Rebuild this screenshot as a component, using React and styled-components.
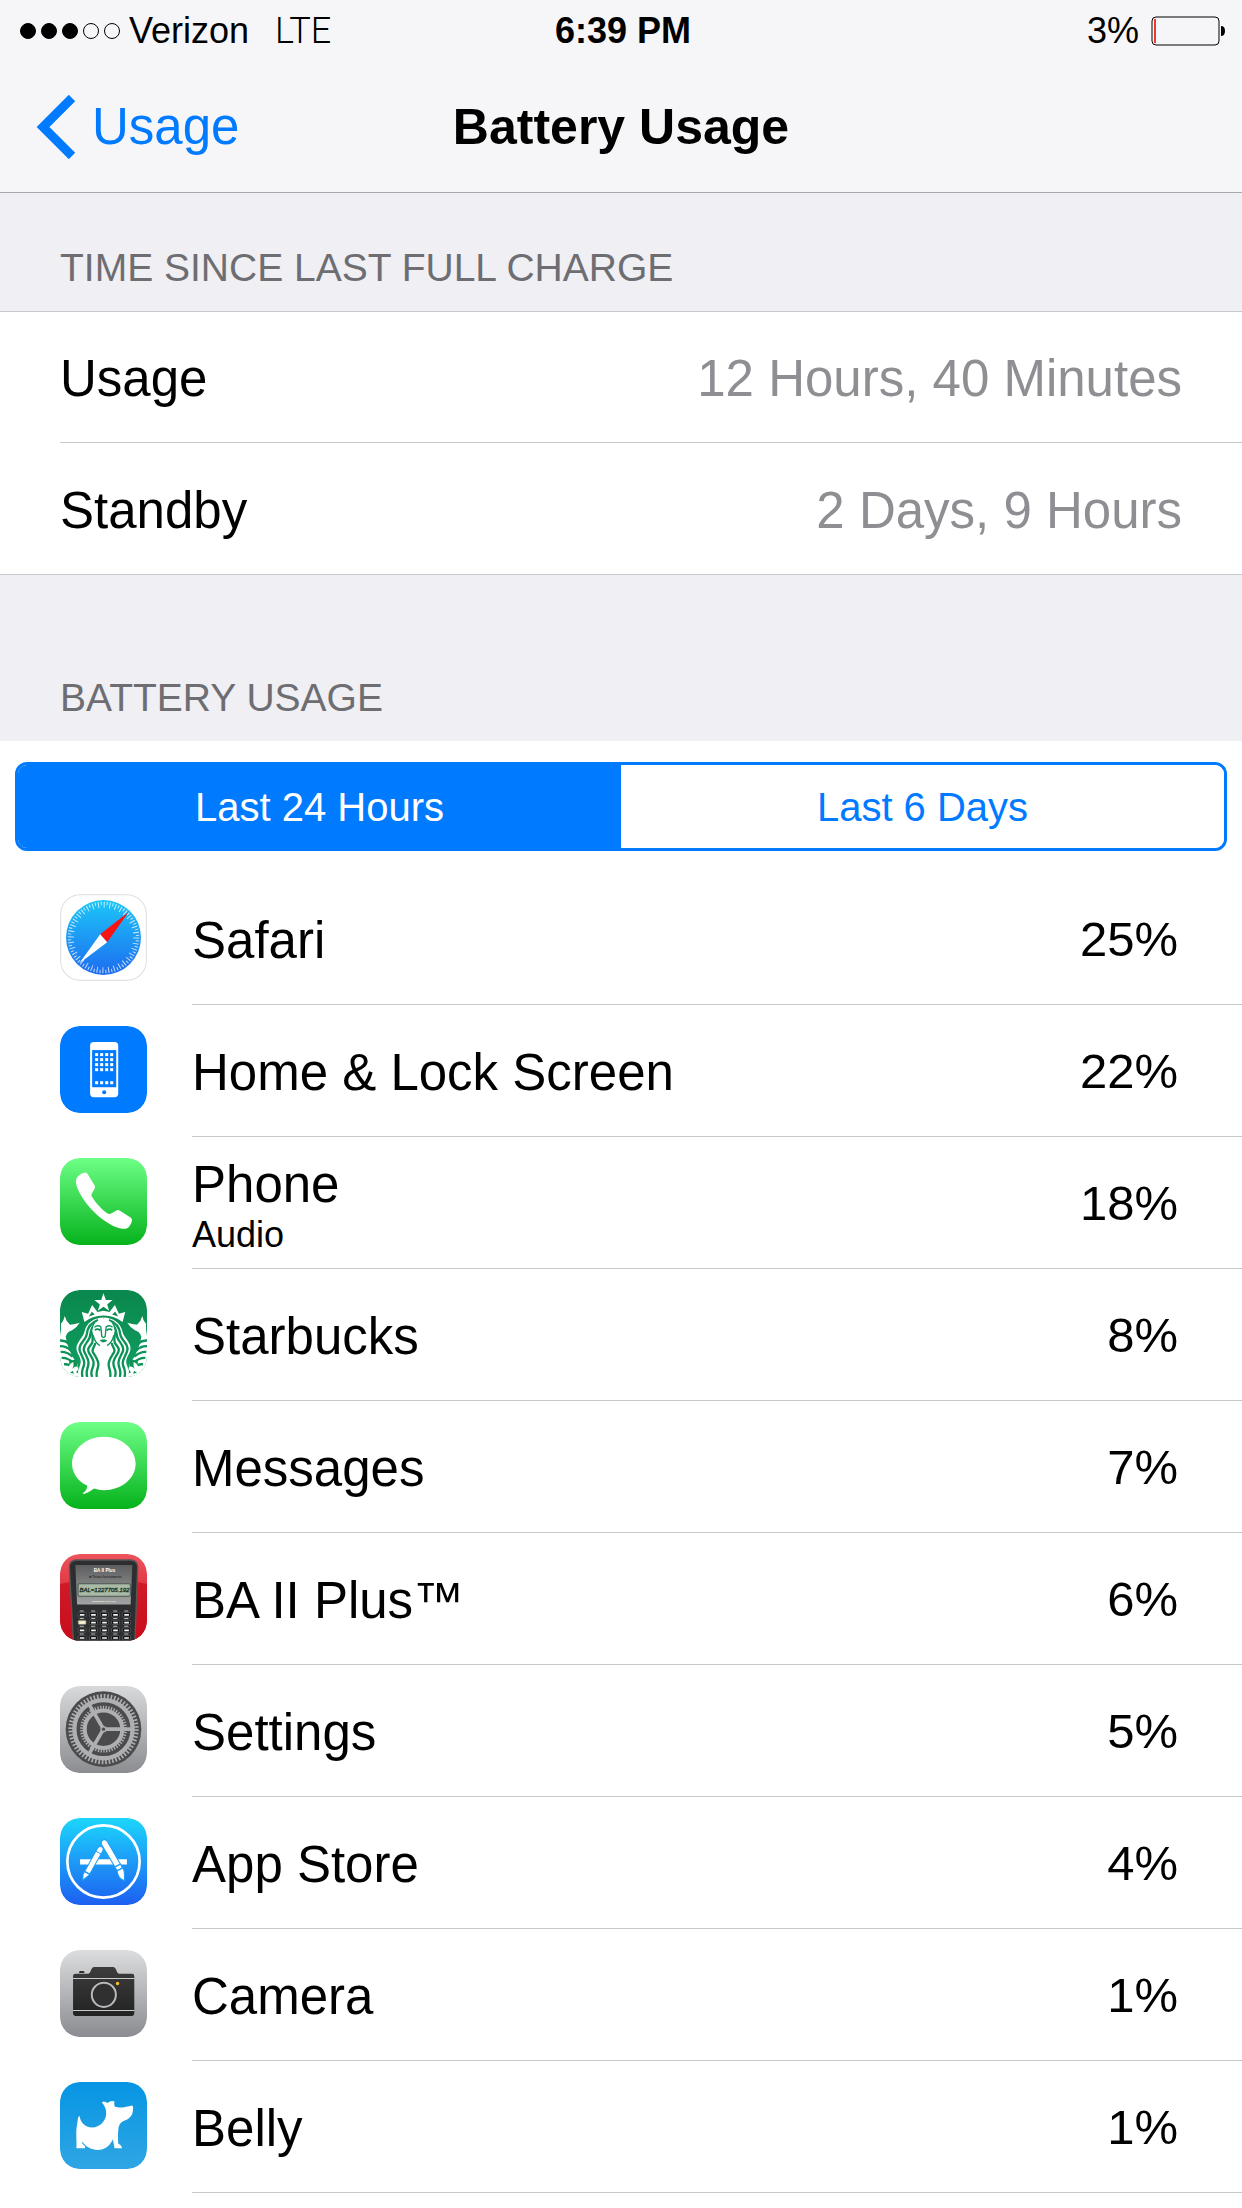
import React, { useState } from "react";
import styled, { createGlobalStyle } from "styled-components";

const GlobalStyle = createGlobalStyle`
  * {
    box-sizing: border-box;
  }

  body {
    margin: 0;
    background: #fff;
    color: #000;
    font-family: "Liberation Sans", Helvetica, Arial, sans-serif;
    font-size: 51px;
    line-height: 60px;
  }
`;

const Page = styled.div`
  display: flex;
  flex-direction: column;
  min-height: 100vh;
  overflow: hidden;
`;

const Top = styled.header`
  background: #f6f6f8;
  border-bottom: 1px solid #a7a7ac;
`;

const StatusBar = styled.div`
  display: grid;
  grid-template-columns: 1fr auto 1fr;
  align-items: center;
  height: 62px;
  padding: 0 16px 0 20px;
  font-size: 36px;
  line-height: 40px;
`;

const StatusLeft = styled.div`
  display: flex;
  align-items: center;
`;

const StatusRight = styled(StatusLeft)`
  justify-content: flex-end;
  gap: 12px;
`;

const Signal = styled.div`
  display: flex;
  gap: 5px;
  margin-right: 9px;
`;

const Dot = styled.span`
  width: 16px;
  height: 16px;
  border: 1px solid #000;
  border-radius: 50%;
  background: ${(p) => (p.$on ? "#000" : "transparent")};
`;

const Network = styled.span`
  margin-left: 26px;
  font-family: Roboto, sans-serif;
  font-weight: 300;
`;

const Time = styled.strong`
  font-weight: 700;
`;

const NavBar = styled.nav`
  display: grid;
  grid-template-columns: 1fr auto 1fr;
  align-items: center;
  height: 130px;
  padding: 0 36px;
`;

const Back = styled.a`
  display: flex;
  align-items: center;
  gap: 16px;
  color: #007aff;
  text-decoration: none;
`;

const Title = styled.h1`
  margin: 0;
  font-size: 50px;
  line-height: 60px;
`;

const SectionHeader = styled.h2`
  display: flex;
  align-items: flex-end;
  height: ${(p) => (p.$tall ? "166px" : "118px")};
  margin: 0;
  padding: 0 60px 19px;
  background: #efeff4;
  color: #6d6d72;
  font-size: 39px;
  font-weight: 400;
  line-height: 48px;
  text-transform: uppercase;
`;

const List = styled.ul`
  margin: 0;
  padding: 0;
  list-style: none;
`;

const DetailList = styled(List)`
  padding-left: 60px;
  border-top: 1px solid #c8c7cc;
  border-bottom: 1px solid #c8c7cc;
`;

const DetailRow = styled.li`
  display: flex;
  align-items: center;
  justify-content: space-between;
  height: 130px;
  padding: 4px 60px 0 0;

  & + & {
    height: 132px;
    border-top: 1px solid #c8c7cc;
  }
`;

const Detail = styled.span`
  color: #8e8e93;
`;

const Segments = styled.div`
  display: flex;
  margin: 21px 15px 22px;
  border: 3px solid #007aff;
  border-radius: 12px;
  overflow: hidden;
`;

const Segment = styled.button`
  flex: 1;
  height: 83px;
  padding: 0;
  border: 0;
  background: ${(p) => (p.$active ? "#007aff" : "#fff")};
  color: ${(p) => (p.$active ? "#fff" : "#007aff")};
  font-family: inherit;
  font-size: 40px;
  line-height: 48px;
`;

const AppRow = styled.li`
  display: flex;
  align-items: center;
  gap: 45px;
  height: 132px;
  padding-left: 60px;
`;

const Icon = styled.svg`
  flex: none;
  width: 87px;
  height: 87px;
  margin-bottom: 4px;
  border-radius: 20px;
`;

const AppBody = styled.div`
  display: flex;
  flex: 1;
  align-items: center;
  justify-content: space-between;
  height: 100%;
  padding-right: 64px;
  border-bottom: 1px solid #c8c7cc;
`;

const AppText = styled.div`
  display: flex;
  flex-direction: column;
  padding-top: 5px;
`;

const AppNote = styled.span`
  font-size: 36px;
  line-height: 40px;
`;

const Percent = styled.span`
  font-size: 49px;
`;

const Fade = ({ id, from, to }) => (
  <linearGradient id={id} x1="0" y1="0" x2="0" y2="1">
    <stop offset="0" stopColor={from} />
    <stop offset="1" stopColor={to} />
  </linearGradient>
);

const SafariIcon = () => (
  <Icon viewBox="0 0 260 260" aria-hidden="true">
    <defs><Fade id="safari" from="#1cc6f8" to="#1d6cf0" /></defs>
    <rect x="2" y="2" width="256" height="256" rx="58" fill="#fff" stroke="#dcdcde" strokeWidth="3" />
    <circle cx="130" cy="130" r="112" fill="url(#safari)" />
    <circle cx="130" cy="130" r="98" fill="none" stroke="#fff" strokeOpacity="0.75" strokeWidth="18" strokeDasharray="3 14.1" />
    <circle cx="130" cy="130" r="102" fill="none" stroke="#fff" strokeOpacity="0.75" strokeWidth="10" strokeDasharray="3 14.8" strokeDashoffset="9" />
    <path d="M205 54 120 120 141 144z" fill="#fb1314" />
    <path d="M58 207 120 120 141 144z" fill="#fff" />
  </Icon>
);

const HomeIcon = () => (
  <Icon viewBox="0 0 260 260" aria-hidden="true">
    <rect width="260" height="260" rx="58" fill="#007aff" />
    <rect x="90" y="48" width="84" height="165" rx="11" fill="#fff" />
    <rect x="96" y="72" width="72" height="111" fill="#007aff" />
    {[81, 96, 111, 126, 165].map((y) =>
      [105, 120, 135, 150].map((x) => (
        <rect key={`${x}-${y}`} x={x} y={y} width="9" height="9" fill="#fff" />
      ))
    )}
    <circle cx="132" cy="198" r="6" fill="#007aff" />
  </Icon>
);

const PhoneIcon = () => (
  <Icon viewBox="0 0 260 260" aria-hidden="true">
    <defs><Fade id="phone" from="#6dff86" to="#06b21c" /></defs>
    <rect width="260" height="260" rx="58" fill="url(#phone)" />
    <path
      d="M48 66C50 54 62 46 75 43Q79 43 82 47L104 83Q107 88 102 94L95 106Q92 112 97 118C108 136 124 153 141 165Q147 169 153 166L170 156Q174 154 178 157L211 178Q217 182 215 188C211 200 207 207 199 211C184 214 166 208 151 199C112 176 78 142 58 103C51 89 46 77 48 66z"
      fill="#fff"
    />
  </Icon>
);

const StarbucksTail = () => (
  <g>
    <path d="M0 137Q4 118 3 100Q10 95 14 78Q17 92 30 104Q44 103 59 98Q51 112 36 120Q21 124 17 140Q22 180 52 222L60 260H0z" fill="#fff" />
    <path d="M0 151Q14 150 27 160M0 168Q16 167 32 180M2 185Q20 184 38 199M5 203Q23 202 43 219M12 222Q28 220 48 236" fill="none" stroke="#0c9458" strokeWidth="7" />
    <path d="M27 213L48 207L54 232L30 238zM30 247l8-6 4 9zM48 246l5-7 4 11z" fill="#0c9458" />
    <path d="M26 238q-2-16 14-23q2 12-3 20q8-9 17-6q-2 10-13 14z" fill="#fff" />
  </g>
);

const StarbucksHair = () => (
  <g>
    <path d="M130 82C99 83 80 99 74 122C70 145 44 158 50 181C55 199 69 207 58 230Q52 244 56 260H130z" fill="#fff" />
    <g fill="none" stroke="#0c9458" strokeWidth="7">
      <path d="M114 90C90 98 82 112 80 132C77 153 53 160 59 181C64 199 79 211 69 232Q64 245 67 260" />
      <path d="M106 101C92 110 92 125 89 141C84 158 66 164 72 183C79 200 91 213 82 234Q78 246 81 260" />
      <path d="M95 124C96 137 101 150 95 160C86 171 80 176 88 190C98 206 105 216 97 234Q91 246 96 260" />
      <path d="M105 158C106 168 92 176 99 187C108 201 120 216 112 236Q108 248 110 260" />
    </g>
  </g>
);

const StarbucksIcon = () => (
  <Icon viewBox="0 0 260 260" aria-hidden="true">
    <defs>
      <clipPath id="sbux"><rect width="260" height="260" rx="58" /></clipPath>
      <Fade id="sbuxBg" from="#0a874d" to="#10a061" />
    </defs>
    <g clipPath="url(#sbux)">
      <rect width="260" height="260" fill="url(#sbuxBg)" />
      <path d="M130 10l7 20h20l-16 13 6 19-17-12-17 12 6-19-16-13h20z" fill="#fff" />
      <path d="M73 96L65 66L84 71L96 45L112 66L130 62L148 66L164 45L176 71L195 66L187 96Q164 76 130 76T73 96z" fill="#fff" />
      <path d="M86 79l9-14 9 8zM174 79l-9-14-9 8z" fill="#0c8a4f" />
      <StarbucksTail />
      <g transform="translate(260 0) scale(-1 1)"><StarbucksTail /></g>
      <StarbucksHair />
      <g transform="translate(260 0) scale(-1 1)"><StarbucksHair /></g>
      <path d="M130 87C102 91 96 111 98 129C100 151 113 169 130 171C147 169 160 151 162 129C164 111 158 91 130 87z" fill="#fff" />
      <path d="M130 166C109 176 109 194 117 210C125 224 122 242 118 260H142C138 242 135 224 143 210C151 194 151 176 130 166z" fill="#fff" />
      <g fill="none" stroke="#0c9458" strokeWidth="4">
        <path d="M103 111Q112 103 122 110L125 139Q130 144 135 139L138 110Q148 103 157 111" />
        <path d="M104 120Q112 114 121 121M139 121Q148 114 156 120" strokeWidth="5" />
        <path d="M119 151Q130 145 141 151Q130 161 119 151z" fill="#0c9458" strokeWidth="1" />
        <path d="M99 135Q104 158 119 166M161 135Q156 158 141 166" />
      </g>
    </g>
  </Icon>
);

const MessagesIcon = () => (
  <Icon viewBox="0 0 260 260" aria-hidden="true">
    <defs><Fade id="messages" from="#6dff86" to="#06b21c" /></defs>
    <rect width="260" height="260" rx="58" fill="url(#messages)" />
    <path
      d="M131 44C79 44 36 80 36 125C36 151 52 177 81 190C83 199 76 208 68 213Q69 216 75 214C86 211 94 204 102 199Q116 204 131 204C184 204 226 169 226 125C226 80 184 44 131 44z"
      fill="#fff"
    />
  </Icon>
);

const CalculatorIcon = () => (
  <Icon viewBox="0 0 260 260" aria-hidden="true">
    <defs>
      <clipPath id="calc"><rect width="260" height="260" rx="58" /></clipPath>
      <Fade id="calcBg" from="#f0535c" to="#c00a18" />
      <Fade id="calcPanel" from="#5c5e5f" to="#a3a5a5" />
    </defs>
    <g clipPath="url(#calc)">
      <rect width="260" height="260" fill="url(#calcBg)" />
      <path d="M0 90Q130 60 260 90V260H0z" fill="#cb0d1d" opacity="0.7" />
      <path d="M28 40Q28 18 50 18H210Q232 18 232 40L224 260H40z" fill="#2d2e2f" stroke="#565859" strokeWidth="4" />
      <path d="M46 33H216L211 151H51z" fill="url(#calcPanel)" />
      <g fontFamily="Liberation Sans, sans-serif" fontWeight="700" textAnchor="middle">
        <text x="133" y="55" fontSize="14" fill="#fff">BA II Plus</text>
        <text x="135" y="72" fontSize="10" fill="#303233">✱ Texas Instruments</text>
        <text x="132" y="142" fontSize="7" fill="#eee">BUSINESS ANALYST</text>
      </g>
      <rect x="54" y="89" width="156" height="37" rx="4" fill="#a9bba7" stroke="#4d5550" strokeWidth="3" />
      <text x="58" y="115" fontFamily="Liberation Sans, sans-serif" fontStyle="italic" fontSize="18" fill="#1d3325" stroke="#1d3325">BAL=1227705.192</text>
      {[175, 198, 221, 244].map((y, row) =>
        [54, 88, 121, 154, 187].map((x, col) => (
          <g key={`${x}-${y}`}>
            <path d={`M${x + 5} ${y - 5}h12`} stroke="#b7b9b9" strokeWidth="3" />
            <rect x={x} y={y} width="24" height="13" rx="3" fill={row === 1 && col === 0 ? "#eee3a6" : "#101112"} stroke="#66686a" strokeWidth="2" />
            <path d={`M${x + 5} ${y + 7}h14`} stroke="#f3f3f3" strokeWidth="5" />
          </g>
        ))
      )}
    </g>
  </Icon>
);

const SettingsIcon = () => (
  <Icon viewBox="0 0 260 260" aria-hidden="true">
    <defs>
      <Fade id="settings" from="#d8d9db" to="#8c8d91" />
    </defs>
    <rect width="260" height="260" rx="58" fill="url(#settings)" />
    <g fill="none" stroke="#aeafb2">
      <circle cx="130" cy="129" r="113" fill="#4b4b4d" stroke="none" />
      <circle cx="130" cy="129" r="98" strokeWidth="14" strokeDasharray="5 5.262" />
      <circle cx="130" cy="129" r="87" strokeWidth="13" />
      <circle cx="130" cy="129" r="65" strokeWidth="10" strokeDasharray="4 4.168" />
      <circle cx="130" cy="129" r="56" strokeWidth="12" />
      <path d="M130 129H216M130 129L87 55M130 129L87 203" strokeWidth="11" />
      <circle cx="130" cy="129" r="9" fill="#aeafb2" />
    </g>
    <circle cx="130" cy="129" r="5" fill="#4b4b4d" />
  </Icon>
);

const AppStoreIcon = () => (
  <Icon viewBox="0 0 260 260" aria-hidden="true">
    <defs><Fade id="store" from="#1cd6fc" to="#1d5ff1" /></defs>
    <rect width="260" height="260" rx="58" fill="url(#store)" />
    <circle cx="130" cy="130" r="108" fill="none" stroke="#fff" strokeWidth="8" />
    <path d="M60 123H200V139H60z" fill="#fff" />
    <g stroke="#1d9cf8" strokeWidth="3" fill="#fff">
      <path d="M111 92Q116 82 125 86Q132 91 127 100L89 167L74 159z" />
      <path d="M73 161L89 169L83 174L68 186L69 168z" />
      <path d="M107 99L123 108" />
      <path d="M123 73Q125 64 133 64Q139 65 142 71L180 137L164 146L124 79z" />
      <path d="M164 147L181 138L186 149L171 157z" />
      <path d="M171 158L187 150C196 158 190 173 194 187C178 184 172 172 171 158z" />
    </g>
  </Icon>
);

const CameraIcon = () => (
  <Icon viewBox="0 0 260 260" aria-hidden="true">
    <defs>
      <Fade id="camera" from="#dcddde" to="#8b8c91" />
      <Fade id="cameraBody" from="#3c3c3d" to="#232324" />
    </defs>
    <rect width="260" height="260" rx="58" fill="url(#camera)" />
    <path d="M57 66Q58 63 61 63H69Q72 63 73 66V69H57z" fill="#2c2c2d" />
    <path
      d="M39 78Q39 71 46 71H83C94 71 91 51 103 51H158C170 51 167 71 178 71H215Q222 71 222 78V190Q222 197 215 197H46Q39 197 39 190z"
      fill="url(#cameraBody)"
    />
    <path d="M39 85H222M39 181H222" stroke="#c9cacc" strokeWidth="3" />
    <circle cx="131" cy="134" r="42" fill="#2c2c2d" />
    <circle cx="131" cy="134" r="36" fill="#303031" stroke="#b9babd" strokeWidth="6" />
    <circle cx="172" cy="100" r="5" fill="#f5c02b" />
  </Icon>
);

const BellyIcon = () => (
  <Icon viewBox="0 0 260 260" aria-hidden="true">
    <defs><Fade id="belly" from="#0695e3" to="#2fa6e4" /></defs>
    <rect width="260" height="260" rx="58" fill="url(#belly)" />
    <path
      d="M58 101C62 121 74 136 96 136C119 135 138 116 138 94C138 77 132 69 125 61Q132 55 142 63Q152 54 163 58Q160 65 164 74C182 80 199 73 215 70Q220 72 218 83C218 96 211 106 202 111C190 117 178 119 175 137C172 155 174 172 174 184Q183 188 186 198H163L158 171C150 190 134 203 112 203C94 203 79 195 66 178Q65 187 75 191V198H49C51 177 46 150 51 128C54 114 52 106 58 101z"
      fill="#fff"
    />
  </Icon>
);

const apps = [
  { name: "Safari", percent: 25, icon: SafariIcon },
  { name: "Home & Lock Screen", percent: 22, icon: HomeIcon },
  { name: "Phone", note: "Audio", percent: 18, icon: PhoneIcon },
  { name: "Starbucks", percent: 8, icon: StarbucksIcon },
  { name: "Messages", percent: 7, icon: MessagesIcon },
  { name: "BA II Plus™", percent: 6, icon: CalculatorIcon },
  { name: "Settings", percent: 5, icon: SettingsIcon },
  { name: "App Store", percent: 4, icon: AppStoreIcon },
  { name: "Camera", percent: 1, icon: CameraIcon },
  { name: "Belly", percent: 1, icon: BellyIcon },
];

const ranges = ["Last 24 Hours", "Last 6 Days"];

export default function App() {
  const [range, setRange] = useState(ranges[0]);

  return (
    <Page>
      <GlobalStyle />
      <Top>
        <StatusBar>
          <StatusLeft>
            <Signal>
              {[1, 2, 3, 4, 5].map((n) => (
                <Dot key={n} $on={n <= 3} />
              ))}
            </Signal>
            Verizon
            <Network>LTE</Network>
          </StatusLeft>
          <Time>6:39 PM</Time>
          <StatusRight>
            3%
            <svg width="75" height="30" viewBox="0 0 75 30" aria-hidden="true">
              <rect x="1" y="1" width="67" height="28" rx="4" fill="none" stroke="#000" />
              <path d="M4 3V27" stroke="#f0392f" strokeWidth="2" />
              <path d="M70 10q4 0 4 5t-4 5z" />
            </svg>
          </StatusRight>
        </StatusBar>
        <NavBar>
          <Back href="#usage">
            <svg width="40" height="64" viewBox="0 0 40 64" aria-hidden="true">
              <path d="M36 3L7 32L36 61" fill="none" stroke="#007aff" strokeWidth="9" />
            </svg>
            Usage
          </Back>
          <Title>Battery Usage</Title>
        </NavBar>
      </Top>

      <main>
        <SectionHeader>Time since last full charge</SectionHeader>
        <DetailList>
          <DetailRow>
            Usage <Detail>12 Hours, 40 Minutes</Detail>
          </DetailRow>
          <DetailRow>
            Standby <Detail>2 Days, 9 Hours</Detail>
          </DetailRow>
        </DetailList>

        <SectionHeader $tall>Battery usage</SectionHeader>
        <Segments>
          {ranges.map((label) => (
            <Segment
              key={label}
              type="button"
              aria-pressed={range === label}
              $active={range === label}
              onClick={() => setRange(label)}
            >
              {label}
            </Segment>
          ))}
        </Segments>
        <List>
          {apps.map(({ name, note, percent, icon: AppIcon }) => (
            <AppRow key={name}>
              <AppIcon />
              <AppBody>
                <AppText>
                  {name}
                  {note && <AppNote>{note}</AppNote>}
                </AppText>
                <Percent>{percent}%</Percent>
              </AppBody>
            </AppRow>
          ))}
        </List>
      </main>
    </Page>
  );
}
